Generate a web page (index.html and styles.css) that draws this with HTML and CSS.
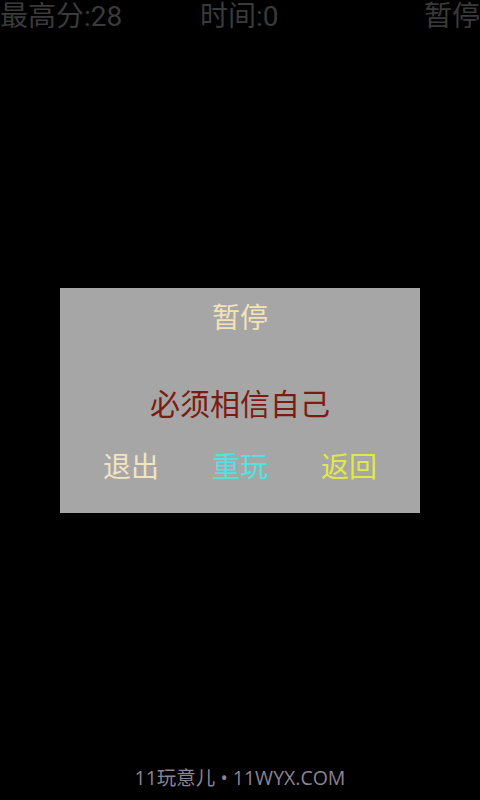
FILE: index.html
```html
<!DOCTYPE html>
<html lang="zh-CN">
<head>
<meta charset="utf-8">
<title>暂停</title>
<link rel="stylesheet" href="styles.css">
</head>
<body>
<div class="screen">
  <header class="topbar">
    <span class="stat">最高分:28</span>
    <span class="stat">时间:0</span>
    <span class="stat pause">暂停</span>
  </header>
  <div class="overlay">
    <div class="dialog">
      <div class="title">暂停</div>
      <div class="message">必须相信自己</div>
      <div class="actions">
        <span class="btn quit">退出</span>
        <span class="btn replay">重玩</span>
        <span class="btn back">返回</span>
      </div>
    </div>
  </div>
  <footer class="watermark">11玩意儿 • 11WYX.COM</footer>
</div>
</body>
</html>
```

FILE: styles.css
```css
html, body {
  margin: 0;
  padding: 0;
  background: #000;
}
body {
  font-family: "Noto Sans CJK SC", "Noto Sans", sans-serif;
}
.screen {
  position: relative;
  width: 480px;
  height: 800px;
  background: #000;
  overflow: hidden;
}
.topbar {
  display: grid;
  grid-template-columns: 200px 1fr auto;
  height: 34px;
  line-height: 34px;
  font-size: 28px;
  color: #3a3a3a;
  font-family: Roboto, "Noto Sans CJK SC", sans-serif;
}
.stat {
  white-space: nowrap;
}
.overlay {
  position: absolute;
  inset: 0;
  display: flex;
  align-items: center;
  justify-content: center;
}
.dialog {
  width: 360px;
  height: 225px;
  box-sizing: border-box;
  padding-top: 8px;
  background: #a6a6a6;
  display: flex;
  flex-direction: column;
  align-items: center;
}
.title {
  font-size: 28px;
  line-height: 40px;
  color: #f3e3b8;
}
.message {
  margin-top: 46px;
  font-size: 30px;
  line-height: 40px;
  color: #7b1c12;
}
.actions {
  margin-top: 23px;
  display: flex;
  gap: 53px;
  font-size: 28px;
  line-height: 40px;
}
.quit { color: #f2e4c0; }
.replay { color: #4fe3e3; }
.back { color: #e3e84a; }
.watermark {
  position: absolute;
  left: 0;
  right: 0;
  bottom: 7px;
  text-align: center;
  font-size: 19.5px;
  line-height: 30px;
  color: #8c8494;
  font-family: "Open Sans", "Noto Sans CJK SC", sans-serif;
}
```
